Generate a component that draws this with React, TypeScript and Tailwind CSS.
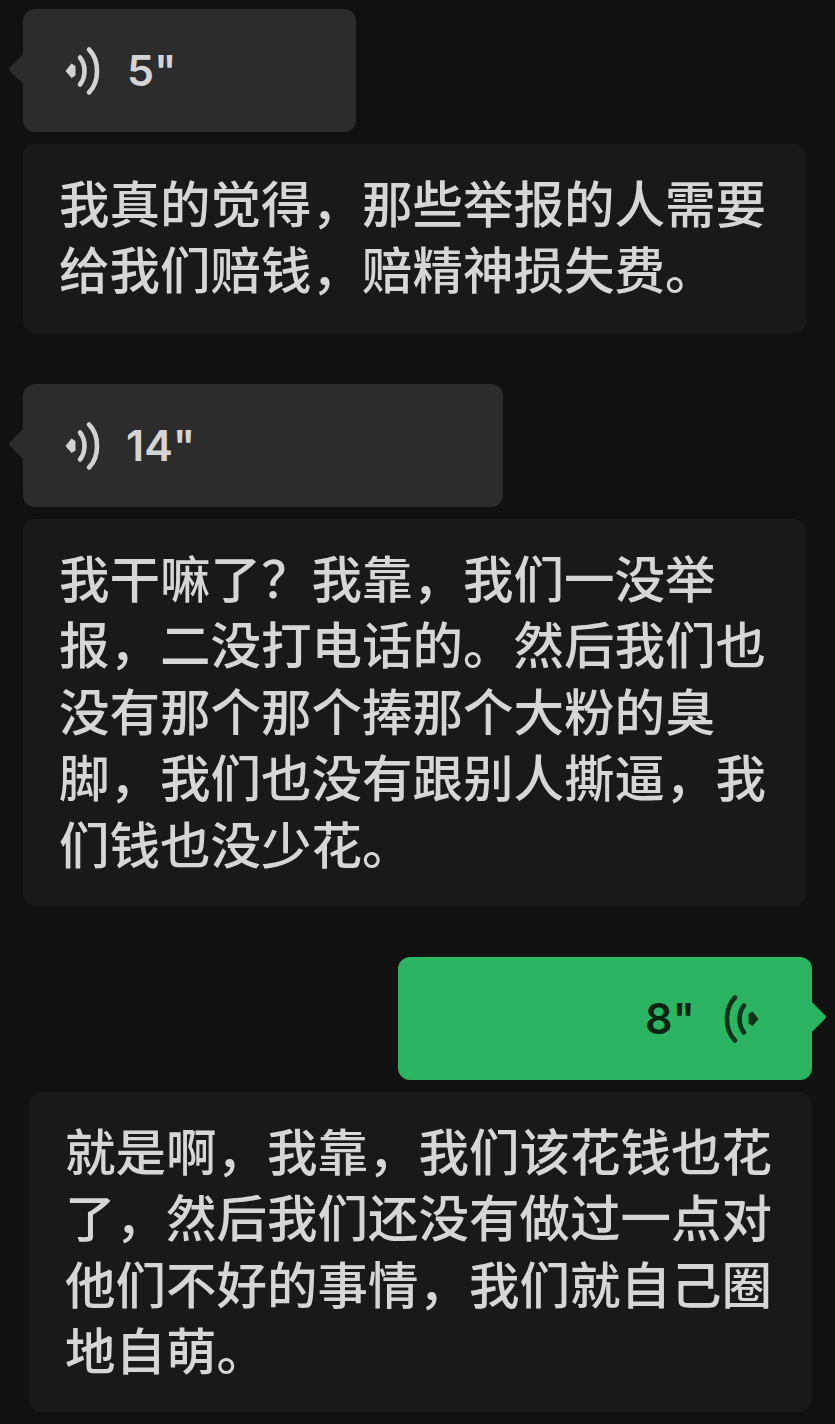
const FONT = "font-['Noto_Sans_CJK_SC','Noto_Sans',sans-serif]";

function WaveIcon({ color }: { color: string }) {
  return (
    <svg width="36" height="50" viewBox="0 0 36 50" fill="none" stroke={color} strokeWidth="4.6" strokeLinecap="round">
      <path d="M0.5 25 L6.5 17.5 L10.5 20 V29.5 L6.5 32 Z" fill={color} stroke="none" />
      <path d="M15 11.5 C21 19 21 31 15 38.5" />
      <path d="M24 3.5 C34.7 14 34.7 36 24 46.5" />
    </svg>
  );
}

function VoiceIn({ width, label, gap }: { width: string; label: string; gap: string }) {
  return (
    <div className={`relative flex h-[123px] items-center rounded-xl bg-[#2c2c2c] pl-[42px] ${width} ${gap}`}>
      <div className="absolute left-[-10px] top-[48px] h-[24px] w-[24px] rotate-45 rounded-[3px] bg-[#2c2c2c]" />
      <WaveIcon color="#d2d2d2" />
      <span className="font-['Inter',sans-serif] text-[43px] font-semibold leading-none text-[#d4d4d4]">{label}</span>
    </div>
  );
}

function Transcript({ lines, className }: { lines: string[]; className: string }) {
  return (
    <div className={`rounded-xl bg-[#191919] pt-[24px] text-[50.5px] font-medium leading-[66.4px] text-[#d6d6d6] ${className}`}>
      {lines.map((line) => (
        <div key={line} className="whitespace-nowrap">{line}</div>
      ))}
    </div>
  );
}

export default function App() {
  return (
    <div className={`flex h-[1424px] w-[835px] flex-col overflow-hidden bg-[#111111] pt-[9px] ${FONT}`}>
      <div className="ml-[23px]">
        <VoiceIn width="w-[333px]" label={'5"'} gap="gap-[26px]" />
      </div>
      <Transcript
        className="ml-[23px] mt-[12px] h-[189px] w-[783px] pl-[36px]"
        lines={["我真的觉得，那些举报的人需要", "给我们赔钱，赔精神损失费。"]}
      />
      <div className="ml-[23px] mt-[51px]">
        <VoiceIn width="w-[480px]" label={'14"'} gap="gap-[25px]" />
      </div>
      <Transcript
        className="ml-[23px] mt-[12px] h-[387px] w-[783px] pl-[36px]"
        lines={[
          "我干嘛了？我靠，我们一没举",
          "报，二没打电话的。然后我们也",
          "没有那个那个捧那个大粉的臭",
          "脚，我们也没有跟别人撕逼，我",
          "们钱也没少花。",
        ]}
      />
      <div className="relative ml-[398px] mt-[51px] flex h-[123px] w-[414px] items-center justify-end gap-[28px] rounded-xl bg-[#2bb562] pr-[53px]">
        <span className="font-['Inter',sans-serif] text-[43px] font-semibold leading-none text-[#06240f]">8"</span>
        <div className="-scale-x-100">
          <WaveIcon color="#06331a" />
        </div>
        <div className="absolute right-[-10px] top-[48px] h-[24px] w-[24px] rotate-45 rounded-[3px] bg-[#2bb562]" />
      </div>
      <Transcript
        className="ml-[29px] mt-[12px] h-[320px] w-[783px] pl-[36px]"
        lines={[
          "就是啊，我靠，我们该花钱也花",
          "了，然后我们还没有做过一点对",
          "他们不好的事情，我们就自己圈",
          "地自萌。",
        ]}
      />
    </div>
  );
}
